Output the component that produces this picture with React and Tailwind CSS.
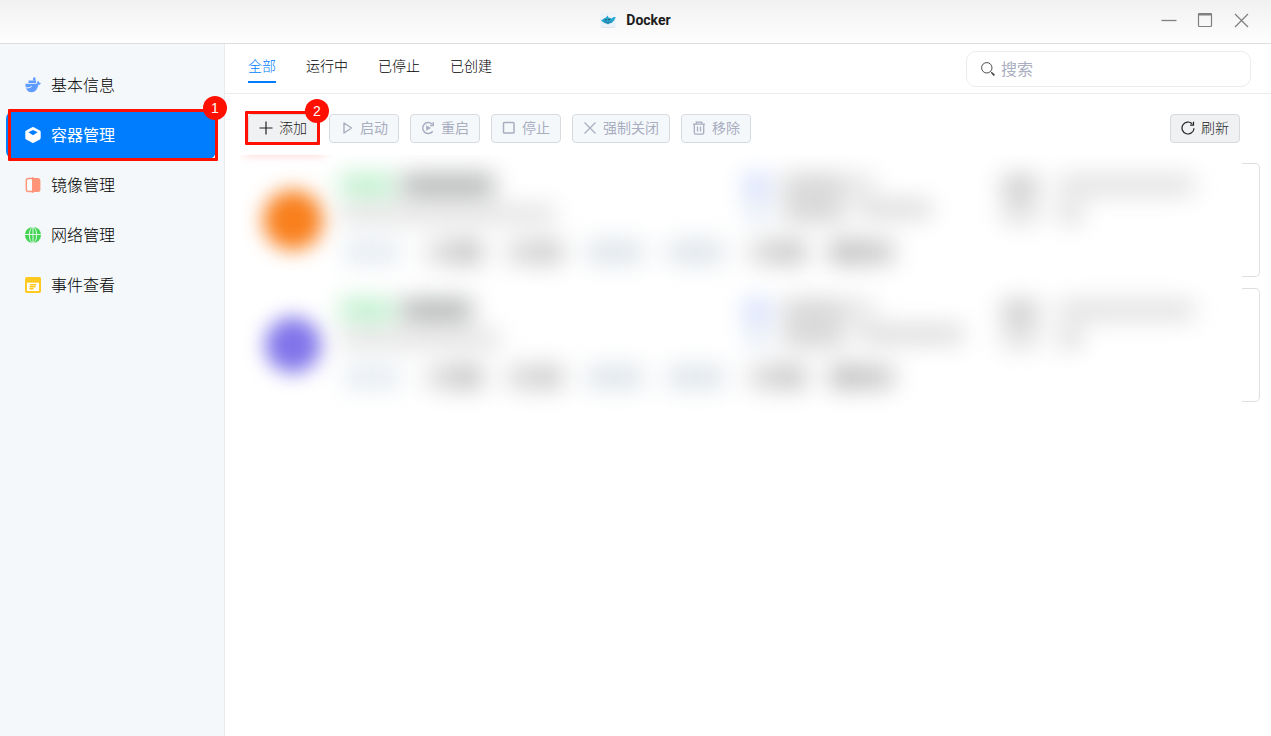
import React from "react";

const svgBase = { "aria-hidden": true, fill: "none", xmlns: "http://www.w3.org/2000/svg" };

/* ---------- icons ---------- */

function AppLogo() {
  return (
    <svg {...svgBase} viewBox="0 0 16 16" className="size-4 shrink-0">
      <rect x="0" y="0" width="16" height="16" rx="3" fill="#eef2f9" />
      <path d="M1.500 15.300h13" stroke="#dbe2f0" strokeWidth="1" strokeLinecap="round" />
      <path d="M.8 7.800c1 .3 1.500 0 2.200-.6.700-.8 1.600-1.300 2.700-1.500l1.900-2.200.9 1.900c1.300.1 2.400.5 3.300 1.200l1.400-1.300 2.600-.3-1.100 2.200c-.2.900-.7 1.600-1.600 2.200L11.500 11l-2.300.5-1.200.9-1.300-.8c-2-.1-4.300-1.200-5.900-3.800z" fill="#22a5cf" />
      <path d="M3.800 9.300c2.200.9 5.200.9 8 0-1.100 1.500-2.500 2.200-4 2.200s-3-.9-4-2.200z" fill="#2a7fa5" />
      <path d="M5 7.200h1.600v1.200H5zM8.300 7h1.600v1.200H8.300z" fill="#2f4a5c" />
    </svg>
  );
}

function WhaleIcon() {
  return (
    <svg {...svgBase} viewBox="0 0 16 16" className="size-4 shrink-0">
      <path d="M8 .5h2.500v2.700H8zM3.500 3.400h7.600v2.700H3.500z" fill="#609cff" />
      <path d="M.4 6.800h10.900c.9 0 1.200-.9.900-2.200l.9-.7c.8.5 1.200 1.100 1.200 1.900l1.600.2c-.3 1.300-1.200 1.800-2.500 1.800-.8 4.500-3.100 7.500-6.900 7.500C2.500 15.300.4 12 .4 6.800z" fill="#609cff" />
      <path d="M1.200 10.800c2 .3 3.900-.1 5.200-1.200" stroke="#f4f8fb" strokeWidth="1" strokeLinecap="round" />
    </svg>
  );
}

function BoxIcon() {
  return (
    <svg {...svgBase} viewBox="0 0 16 16" className="size-4 shrink-0">
      <path d="M7.200.3a1.700 1.700 0 0 1 1.600 0l6 3.200c.6.300.9.800.9 1.400v6.200c0 .6-.3 1.100-.9 1.400l-6 3.200a1.700 1.700 0 0 1-1.600 0l-6-3.200a1.500 1.500 0 0 1-.9-1.400V4.900c0-.6.300-1.100.9-1.400z" fill="#fff" />
      <path d="M3.400 5.300 8 2.900l4.600 2.400L8 8.300z" fill="#007dff" />
    </svg>
  );
}

function ImageIcon() {
  return (
    <svg {...svgBase} viewBox="0 0 16 16" className="size-4 shrink-0">
      <path d="M8 1.500H3.200c-1.100 0-1.900.8-1.900 1.900v9.200c0 1.100.8 1.900 1.900 1.900H8" stroke="#ff9478" strokeWidth="1.400" />
      <path d="M3.300 3.300H6.600v9.400H3.300z" fill="#fff" />
      <path d="M7 .2h1.700v.7h4.400c1.300 0 2.300 1 2.300 2.300v9.600c0 1.300-1 2.300-2.300 2.300H8.700v.7H7z" fill="#ff9478" />
    </svg>
  );
}

function GlobeIcon() {
  return (
    <svg {...svgBase} viewBox="0 0 16 16" className="size-4 shrink-0">
      <circle cx="8" cy="8" r="8" fill="#42d551" />
      <ellipse cx="8" cy="8" rx="3.600" ry="8" stroke="#f4f8fb" strokeWidth=".9" />
      <path d="M8 0v16M0 7.500h16" stroke="#f4f8fb" strokeWidth=".9" />
    </svg>
  );
}

function EventIcon() {
  return (
    <svg {...svgBase} viewBox="0 0 16 16" className="size-4 shrink-0">
      <rect width="16" height="16" rx="1.800" fill="#ffc91f" />
      <path d="M2 5.700h12v8.300H2z" fill="#fff" />
      <path d="M5.400 7.800h5.400M5 9.800h5M5 11.800h3" stroke="#ffc91f" strokeWidth="1.500" strokeLinecap="round" />
    </svg>
  );
}

function ToolIcon({ children, width = 1.2 }) {
  return (
    <svg {...svgBase} viewBox="0 0 14 14" className="size-3.5 shrink-0" stroke="currentColor" strokeWidth={width}>
      {children}
    </svg>
  );
}

const PlusIcon = () => <ToolIcon><path d="M7 .5v13M.5 7h13" /></ToolIcon>;
const PlayIcon = () => <ToolIcon width={1.4}><path d="M4 2 11.500 7 4 12z" strokeLinejoin="round" /></ToolIcon>;
const StopIcon = () => <ToolIcon width={1.5}><rect x="1.500" y="1.500" width="10.500" height="10.500" rx=".8" /></ToolIcon>;
const CloseIcon = () => <ToolIcon><path d="m1.500 1.500 11 11m0-11-11 11" /></ToolIcon>;
const RestartIcon = () => (
  <ToolIcon width={1.5}>
    <path d="M11.700 10.200A5.500 5.500 0 1 1 11 3" />
    <path d="M12.200 1.200v3.400H9" />
    <path d="M5.200 4.200 10 7l-4.800 2.800z" fill="currentColor" stroke="none" />
  </ToolIcon>
);
const TrashIcon = () => (
  <ToolIcon width={1.3}>
    <path d="M1 3.200h12M4.300 3V1.200h5.400V3M2.300 3.400v8.400c0 .8.500 1.300 1.300 1.300h6.800c.8 0 1.300-.5 1.300-1.300V3.400M5.500 5.600v5M8.500 5.600v5" />
  </ToolIcon>
);
const RefreshIcon = () => (
  <ToolIcon>
    <path d="M13 7.200A6 6 0 1 1 11.200 2.700" />
    <path d="M12.500.8v3.300H9.100" />
  </ToolIcon>
);

/* ---------- numbered markers ---------- */

function Marker({ number, box, dot }) {
  return (
    <span className={`pointer-events-none absolute z-10 rounded-[1px] border-3 border-[#ff1000] ${box}`}>
      <span className={`absolute flex size-6 items-center justify-center rounded-full bg-[#ff1000] text-sm font-normal text-white ${dot}`}>
        {number}
      </span>
    </span>
  );
}

/* ---------- window parts ---------- */

function TitleBar() {
  return (
    <header className="relative flex h-11 shrink-0 items-center justify-center border-b border-[#dedede] bg-linear-to-b from-[#f1f1f1] to-[#fefefe] pb-1">
      <div className="flex items-center gap-2.5">
        <AppLogo />
        <h1 className="font-[Roboto,sans-serif] text-sm font-bold text-[#1c1c1c]">Docker</h1>
      </div>
      <div className="absolute right-[22px] flex items-center gap-5 text-[#808080]">
        <button type="button" aria-label="最小化" className="flex size-4 items-center justify-center">
          <svg {...svgBase} viewBox="0 0 16 16" className="size-4"><path d="M.5 8.500h15" stroke="currentColor" strokeWidth="1.300" /></svg>
        </button>
        <button type="button" aria-label="最大化" className="flex size-4 items-center justify-center">
          <svg {...svgBase} viewBox="0 0 16 16" className="size-4">
            <rect x="1.500" y="1.500" width="13" height="13" rx="1" stroke="currentColor" strokeWidth="1.200" />
            <path d="M1 2.500h14" stroke="currentColor" strokeWidth="2" />
          </svg>
        </button>
        <button type="button" aria-label="关闭" className="flex size-4 items-center justify-center">
          <svg {...svgBase} viewBox="0 0 16 16" className="size-4"><path d="m2 2 13 13m0-13L2 15" stroke="currentColor" strokeWidth="1.300" /></svg>
        </button>
      </div>
    </header>
  );
}

const NAV = [
  { label: "基本信息", Icon: WhaleIcon },
  { label: "容器管理", Icon: BoxIcon, active: true },
  { label: "镜像管理", Icon: ImageIcon },
  { label: "网络管理", Icon: GlobeIcon },
  { label: "事件查看", Icon: EventIcon },
];

function Sidebar() {
  return (
    <nav className="flex w-[225px] shrink-0 flex-col gap-0.5 border-r border-[#e9ecef] bg-[#f4f8fb] pt-[17px] pr-2 pl-1.5">
      {NAV.map(({ label, Icon, active }) => (
        <a
          key={label}
          href="#"
          aria-current={active ? "page" : undefined}
          className={`relative flex h-12 items-center gap-2.5 rounded-lg px-[19px] text-base ${active ? "bg-[#007dff] font-normal text-white" : "text-black"}`}
        >
          <Icon />
          <span className="pt-0.5">{label}</span>
          {active && <Marker number="1" box="-top-0.5 -right-0.5 -bottom-0.5 left-0.5" dot="-top-4 -right-3" />}
        </a>
      ))}
    </nav>
  );
}

const TABS = ["全部", "运行中", "已停止", "已创建"];

function FilterBar() {
  return (
    <div className="flex h-[50px] shrink-0 items-center justify-between border-b border-[#ececec] pr-5 pl-[23px]">
      <div role="tablist" className="flex gap-[30px]">
        {TABS.map((tab, i) => (
          <button
            key={tab}
            type="button"
            role="tab"
            aria-selected={i === 0}
            className={`h-7 border-b-2 pb-1 text-sm ${i === 0 ? "border-[#007dff] text-[#007dff]" : "border-transparent text-black"}`}
          >
            {tab}
          </button>
        ))}
      </div>
      <label className="flex h-9 w-[285px] items-center gap-1.5 rounded-[10px] border border-[#ececec] px-3.5">
        <svg {...svgBase} viewBox="0 0 14 14" className="size-3.5 shrink-0 text-[#4b4b4b]">
          <circle cx="5.800" cy="5.800" r="5.200" stroke="currentColor" />
          <path d="m9.600 9.600 1.500 1.500" stroke="currentColor" />
          <path d="m10.900 10.900 2.500 2.500" stroke="currentColor" strokeWidth="1.800" />
        </svg>
        <input
          type="search"
          aria-label="搜索"
          placeholder="搜索"
          className="min-w-0 flex-1 bg-transparent pt-0.5 text-base font-normal text-[#333] outline-none placeholder:text-[#a9aec0]"
        />
      </label>
    </div>
  );
}

function ToolButton({ Icon, label, disabled, children }) {
  return (
    <button
      type="button"
      disabled={disabled}
      className={`relative flex h-[29px] items-center gap-1.5 rounded border px-2.5 pb-0.5 text-sm ${disabled ? "border-[#d7dadf] bg-[#f4f8fb] font-normal text-[#a9adc0]" : "border-[#d8d9dc] bg-[#f0f1f3] text-[#222]"}`}
    >
      <Icon />
      <span>{label}</span>
      {children}
    </button>
  );
}

const ACTIONS = [
  { label: "启动", Icon: PlayIcon },
  { label: "重启", Icon: RestartIcon },
  { label: "停止", Icon: StopIcon },
  { label: "强制关闭", Icon: CloseIcon },
  { label: "移除", Icon: TrashIcon },
];

function Toolbar() {
  return (
    <div className="flex shrink-0 items-center justify-between pt-5 pr-[31px] pl-[23px]">
      <div className="flex gap-[11px]">
        <ToolButton Icon={PlusIcon} label="添加">
          <Marker number="2" box="-top-1 -right-[3px] -bottom-[3px] -left-1" dot="-top-[15px] -right-3" />
        </ToolButton>
        {ACTIONS.map((a) => (
          <ToolButton key={a.label} {...a} disabled />
        ))}
      </div>
      <ToolButton Icon={RefreshIcon} label="刷新" />
    </div>
  );
}

/* ---------- obscured container cards ---------- */

const CHIPS = [
  "w-14 bg-[#e3eaf0]",
  "w-14 bg-linear-to-r from-[#e4e4e4] to-[#b0b0b0]",
  "w-14 bg-linear-to-r from-[#dcdcdc] to-[#c0c0c0]",
  "w-14 bg-[#dbe2e8]",
  "w-14 bg-[#dbe2e8]",
  "w-14 bg-linear-to-r from-[#dcdcdc] to-[#b8b8b8]",
  "w-16 bg-linear-to-r from-[#b4b4b4] to-[#cacaca]",
];

const CARDS = [
  {
    avatar: "bg-[#f97f1c]", size: "size-[60px]", name: "w-[92px]", image: "w-[215px]", meta: "w-[72px]",
  },
  {
    avatar: "bg-[#8074ea]", size: "size-14", name: "w-[70px]", image: "w-[160px]", meta: "w-[104px]",
  },
];

function ContainerCard({ card }) {
  return (
    <article className="flex h-[114px]">
      <div aria-hidden="true" className="flex min-w-0 flex-1 items-start pt-3 pl-[22px]">
        <div className="mt-3.5 flex size-[62px] shrink-0 items-center justify-center">
          <div className={`rounded-full blur-[10px] ${card.avatar} ${card.size}`} />
        </div>
        <div className="ml-4 grid min-w-0 flex-1 grid-cols-[405px_257px_1fr] blur-[12px]">
          <div className="flex flex-col gap-3">
            <div className="flex gap-2">
              <div className="h-5 w-[54px] bg-[#b4edc4]" />
              <div className={`h-5 bg-[#a8aaaa] ${card.name}`} />
            </div>
            <div className={`h-3.5 bg-[#d8d8d8] ${card.image}`} />
          </div>
          <div className="flex flex-col gap-1.5">
            <div className="flex gap-3.5">
              <div className="h-5 w-6 bg-[#c9d5fa]" />
              <div className="h-5 w-[60px] bg-[#cfcfcf]" />
              <div className="-ml-3.5 h-5 w-8 bg-[#e4e4e4]" />
            </div>
            <div className="flex gap-3.5">
              <div className="h-5 w-6 bg-[#e0e8f4]" />
              <div className="h-5 w-[62px] bg-[#cfcfcf]" />
              <div className={`h-4 bg-[#d4d4d4] ${card.meta}`} />
            </div>
          </div>
          <div className="flex flex-col gap-1">
            <div className="flex gap-5">
              <div className="h-6 w-9 bg-[#cdcdcd]" />
              <div className="h-5 w-[136px] bg-[#dfdfdf]" />
            </div>
            <div className="flex gap-5">
              <div className="h-5 w-9 bg-[#dedede]" />
              <div className="h-5 w-6 bg-[#dadada]" />
            </div>
          </div>
          <div className="col-span-3 mt-[18px] flex gap-[25px] pl-1">
            {CHIPS.map((chip, i) => (
              <div key={i} className={`h-[22px] ${chip}`} />
            ))}
          </div>
        </div>
      </div>
      <div className="w-[18px] rounded-r-[5px] border-y border-r border-[#dfdfdf]" />
    </article>
  );
}

function ContainerList() {
  return (
    <section aria-label="容器列表" className="relative mt-3 mr-[11px] ml-[15px] flex flex-col gap-[11px] overflow-hidden pt-2 pb-4">
      <div className="absolute -top-2.5 left-1 h-2 w-20 bg-[#ff1000]/30 blur-[6px]" />
      {CARDS.map((card) => (
        <ContainerCard key={card.avatar} card={card} />
      ))}
    </section>
  );
}

export default function App() {
  return (
    <div className="flex min-h-screen flex-col bg-white font-['Liberation_Sans','Noto_Sans_CJK_SC',sans-serif] font-light">
      <TitleBar />
      <div className="flex flex-1">
        <Sidebar />
        <main className="flex min-w-0 flex-1 flex-col">
          <FilterBar />
          <Toolbar />
          <ContainerList />
        </main>
      </div>
    </div>
  );
}
